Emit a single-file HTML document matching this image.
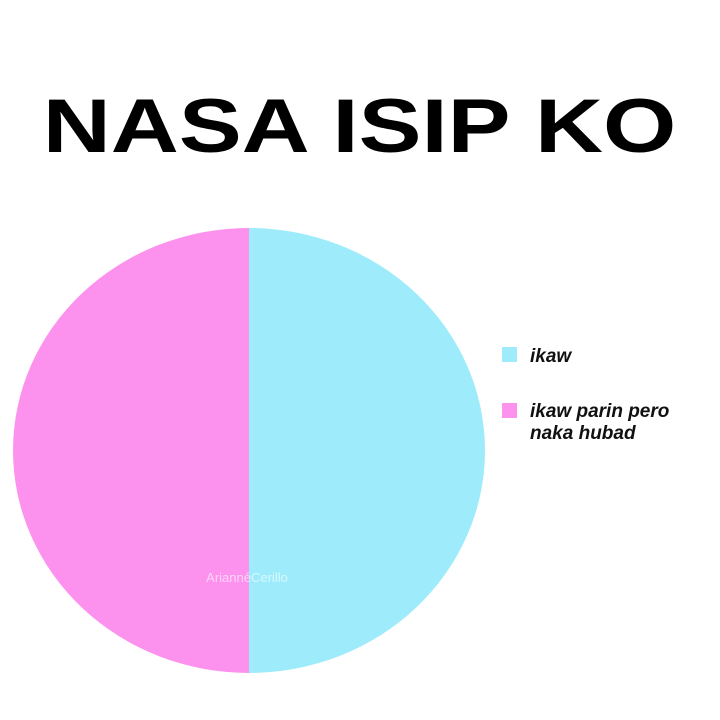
<!DOCTYPE html>
<html><head><style>
html,body{margin:0;padding:0;background:#fff;width:720px;height:720px;overflow:hidden;position:relative;font-family:"Liberation Sans",sans-serif}
.t{position:absolute;left:0;width:720px;top:83px;text-align:center;font-weight:bold;font-size:76px;line-height:88px;color:#000;transform:scaleX(1.24);transform-origin:362px 0}
.sw{position:absolute;left:502px;width:15px;height:15px}
.lg{position:absolute;left:530px;font-weight:900;font-style:italic;font-size:19px;line-height:22px;color:#111}
</style></head><body>
<div class="t">NASA ISIP KO</div>
<svg style="position:absolute;left:0;top:0" width="720" height="720">
<path d="M249 228 A236 222.5 0 0 0 249 673 Z" fill="#fd92ee"/>
<path d="M249 228 A236 222.5 0 0 1 249 673 Z" fill="#9eecfb"/>
<text x="247" y="582" text-anchor="middle" font-family="Liberation Sans" font-size="13" fill="#fff" opacity="0.6">AriannéCerillo</text>
</svg>
<div class="sw" style="top:347px;background:#9eecfb"></div>
<div class="lg" style="top:346px">ikaw</div>
<div class="sw" style="top:403px;background:#fd92ee"></div>
<div class="lg" style="top:401px">ikaw parin pero<br>naka hubad</div>
</body></html>
